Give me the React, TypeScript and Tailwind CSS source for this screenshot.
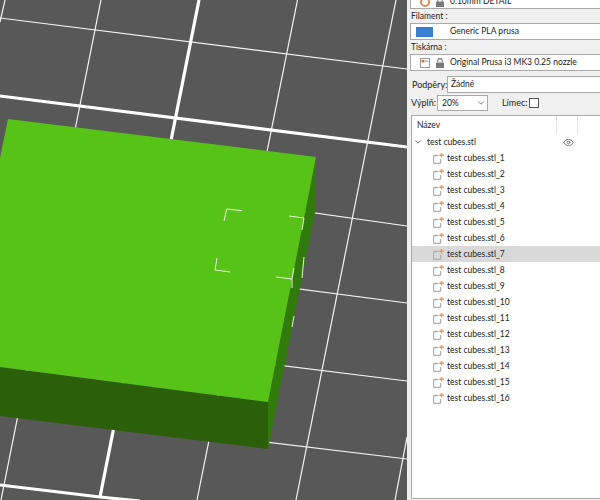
import { ChevronDown, Eye } from 'lucide-react'

const parts = Array.from({ length: 16 }, (_, i) => `test cubes.stl_${i + 1}`)

function PartIcon() {
  return (
    <svg width="11" height="11" viewBox="0 0 11 11" className="shrink-0" fill="none">
      <path d="M5.500 2.500H1.400a.8.8 0 0 0-.8.8v6.300a.8.8 0 0 0 .8.8h5.400a.8.8 0 0 0 .8-.8V6" stroke="#b0b0b0" strokeWidth="1.300" />
      <path d="M8.500 0v4.500M6.300 2.200h4.500" stroke="#f0955a" strokeWidth="1.400" />
    </svg>
  )
}

function PrinterIcon() {
  return (
    <svg width="10" height="10" viewBox="0 0 10 10" className="shrink-0" fill="none">
      <rect x="0.5" y="0.5" width="9" height="9" fill="#fbfbfb" stroke="#9a9a9a" />
      <rect x="1.500" y="2" width="2.500" height="2.500" fill="#ed6b21" />
      <path d="M4 3.200h4.500" stroke="#a0a0a0" />
    </svg>
  )
}

function LockIcon() {
  return (
    <svg width="8" height="10" viewBox="0 0 8 10" className="shrink-0" fill="none">
      <path d="M1.800 4.500V2.800a2.200 2.200 0 0 1 4.400 0v1.700" stroke="#7a7a7a" strokeWidth="1.100" />
      <rect x="0" y="4.500" width="8" height="5.500" rx="0.600" fill="#7a7a7a" />
    </svg>
  )
}

function Scene() {
  return (
    <svg className="h-full w-full" viewBox="0 0 407 500" preserveAspectRatio="none">
      <rect width="407" height="500" fill="#585858" />
      <g stroke="#f4f4f4" strokeWidth="1.200" fill="none">
        <path d="M101 0L1 500" />
        <path d="M297.500 0L197 500" />
        <path d="M396 0L296 500" />
        <path d="M5 0L0 22" />
        <path d="M407 437L395 500" />
        <path d="M0 18L407 69" />
        <path d="M0 168.500L407 226" />
        <path d="M0 250L407 303" />
        <path d="M0 331L407 381" />
        <path d="M0 410L407 459" />
      </g>
      <g stroke="#ffffff" strokeWidth="3.200" fill="none">
        <path d="M0 96L407 147" />
        <path d="M199 0L100 497" />
        <path d="M0 485L100 497L140 501" />
      </g>
      <polygon points="0,367 268,402 268,449 0,416" fill="#2c5f0a" />
      <polygon points="316,157 316,207 268,449 268,402" fill="#317a0c" />
      <polygon points="8,119 316,157 268,402 0,367 0,158" fill="#56c316" />
      <g stroke="#e8f5de" strokeWidth="1" fill="none">
        <path d="M224 221L226.700 209L242 210.700" />
        <path d="M289 216L304 218L302 230" />
        <path d="M217 258L215 270L230 272" />
        <path d="M276 277L292 279L294 268" />
        <path d="M292 279L292 288" />
        <path d="M304 257L302 278" />
        <path d="M294 316L292 327" />
      </g>
    </svg>
  )
}

export default function App() {
  return (
    <div className="flex h-[500px] w-[600px] overflow-hidden bg-[#f0f0f0] font-['Lato','Open_Sans',sans-serif] text-[8.5px] whitespace-nowrap text-[#222222]">
      <div className="h-full w-[407px] shrink-0">
        <Scene />
      </div>
      <aside className="flex min-w-0 flex-1 flex-col overflow-hidden pl-[3px]">
        <div className="-mt-[6px] flex h-[15px] shrink-0 items-center border border-r-0 border-[#a9a9a9] bg-white pl-[9px]">
          <span className="h-[10px] w-[10px] shrink-0 rounded-full border-2 border-[#d98b5a]" />
          <span className="ml-[6px]"><LockIcon /></span>
          <span className="ml-[6px]">0.10mm DETAIL</span>
        </div>
        <div className="h-[14px] shrink-0 pl-[1px] leading-[14px]">Filament :</div>
        <div className="flex h-[17px] shrink-0 items-center border border-r-0 border-[#a9a9a9] bg-white pl-[5px]">
          <span className="h-[10px] w-[17px] bg-[#3a7fd0]" />
          <span className="ml-[17px]">Generic PLA prusa</span>
        </div>
        <div className="h-[14px] shrink-0 pl-[1px] leading-[14px]">Tiskárna :</div>
        <div className="flex h-[17px] shrink-0 items-center border border-r-0 border-[#a9a9a9] bg-white pl-[9px]">
          <PrinterIcon />
          <span className="ml-[6px]"><LockIcon /></span>
          <span className="ml-[6px]">Original Prusa i3 MK3 0.25 nozzle</span>
        </div>
        <div className="mt-[5px] flex h-[17px] shrink-0 items-center">
          <span className="w-[37px] shrink-0 pl-[2px] text-[9px]">Podpěry:</span>
          <div className="flex h-full flex-1 items-center border border-r-0 border-[#a9a9a9] bg-white pl-[3px]">Žádné</div>
        </div>
        <div className="mt-[2px] flex h-[16px] shrink-0 items-center">
          <span className="w-[27px] shrink-0 pl-[1px] text-[9px]">Výplň:</span>
          <div className="flex h-full w-[51px] shrink-0 items-center justify-between border border-[#a9a9a9] bg-white pr-[1px] pl-[4px]">
            20%
            <ChevronDown size={10} className="text-[#666666]" />
          </div>
          <span className="ml-[14px] text-[9px]">Límec:</span>
          <span className="ml-[2px] h-[10px] w-[10px] border border-[#555555] bg-white" />
        </div>
        <div className="mt-[4px] mb-[1px] ml-[1px] flex min-h-0 flex-1 flex-col border border-r-0 border-[#a9a9a9] bg-white">
          <div className="flex h-[18px] shrink-0 items-center pl-[5px]">
            <span className="flex h-full w-[140px] items-center border-r border-[#e5e5e5]">Název</span>
            <span className="h-full w-[21px] border-r border-[#e5e5e5]" />
          </div>
          <div className="flex h-[16px] shrink-0 items-center pl-[1px]">
            <ChevronDown size={10} className="text-[#555555]" />
            <span className="ml-[4px] w-[136px]">test cubes.stl</span>
            <Eye size={11} className="text-[#777777]" />
          </div>
          {parts.map((name, i) => (
            <div key={name} className={`flex h-[16px] shrink-0 items-center gap-[3px] pl-[21px] ${i === 6 ? 'bg-[#d9d9d9]' : ''}`}>
              <PartIcon />
              <span>{name}</span>
            </div>
          ))}
        </div>
      </aside>
    </div>
  )
}
